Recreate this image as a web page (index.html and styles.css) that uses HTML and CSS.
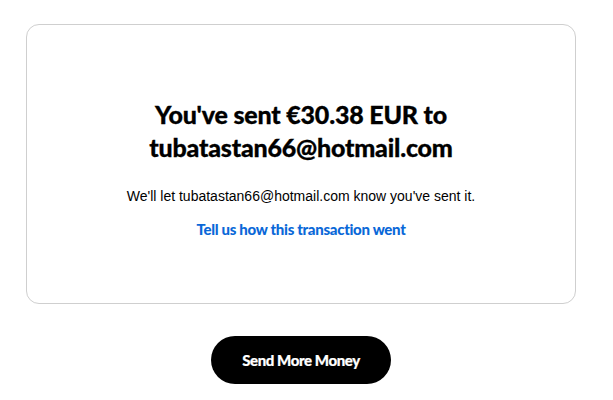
FILE: index.html
```html
<!DOCTYPE html>
<html lang="en">
<head>
<meta charset="utf-8">
<title>Sent</title>
<link rel="stylesheet" href="styles.css">
</head>
<body>
<main class="page">
  <section class="card">
    <h1 class="title">You've sent €30.38 EUR to tubatastan66@hotmail.com</h1>
    <p class="note">We'll let tubatastan66@hotmail.com know you've sent it.</p>
    <a class="feedback" href="#">Tell us how this transaction went</a>
  </section>
  <div class="actions">
    <a class="btn" href="#">Send More Money</a>
  </div>
</main>
</body>
</html>
```
FILE: styles.css
```css
* { box-sizing: border-box; }
html, body { margin: 0; padding: 0; background: #fff; }
body { font-family: "Lato", "Liberation Sans", sans-serif; color: #000; }
.page {
  width: 550px;
  margin: 24px 0 0 26px;
  display: flex;
  flex-direction: column;
  align-items: center;
}
.card {
  width: 550px;
  height: 280px;
  border: 1px solid #cfcfcf;
  border-radius: 13px;
  display: flex;
  flex-direction: column;
  align-items: center;
  padding-top: 73px;
}
.title {
  margin: 0;
  width: 340px;
  text-align: center;
  font-family: "Lato", sans-serif;
  font-weight: 900;
  font-size: 25px;
  line-height: 33px;
  letter-spacing: -0.2px;
  -webkit-text-stroke: 0.3px #000;
}
.note {
  margin: 24px 0 0;
  font-family: "Liberation Sans", Arial, sans-serif;
  font-size: 14px;
  line-height: 16px;
}
.feedback {
  margin-top: 16px;
  font-family: "Lato", sans-serif;
  font-weight: 900;
  font-size: 15px;
  line-height: 18px;
  color: #0a68d8;
  text-decoration: none;
  letter-spacing: -0.3px;
}
.actions { margin-top: 32px; display: flex; justify-content: center; }
.btn {
  width: 180px;
  height: 48px;
  border-radius: 24px;
  background: #000;
  color: #fff;
  display: flex;
  align-items: center;
  justify-content: center;
  font-family: "Lato", sans-serif;
  font-weight: 900;
  font-size: 15px;
  letter-spacing: -0.4px;
  text-decoration: none;
  -webkit-text-stroke: 0.2px #fff;
}
```
